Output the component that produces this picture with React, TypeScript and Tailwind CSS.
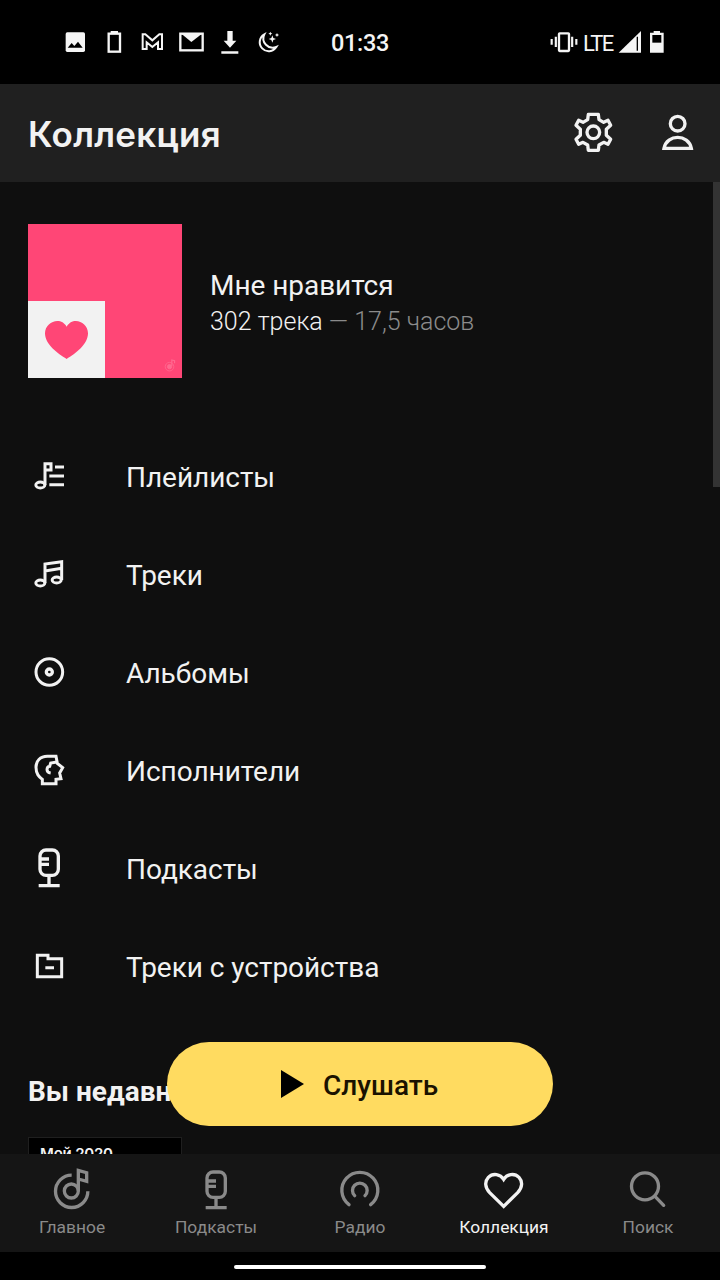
import React from 'react';

interface IconProps {
  children: React.ReactNode;
  className?: string;
  viewBox?: string;
}

function Icon({
  children,
  className = 'size-[42px]',
  viewBox = '0 0 126 126',
}: IconProps) {
  return (
    <svg
      viewBox={viewBox}
      className={`shrink-0 overflow-visible ${className}`}
      fill="none"
      stroke="currentColor"
      strokeWidth="10"
    >
      {children}
    </svg>
  );
}

function MicIcon() {
  return (
    <Icon>
      <rect x="36" y="6" width="55" height="76" rx="18" />
      <path d="M33 33h30M33 49h30M63 82v30M32 113h63" />
    </Icon>
  );
}

const menuItems = [
  {
    label: 'Плейлисты',
    icon: (
      <Icon>
        <g strokeWidth="9">
          <ellipse cx="37" cy="87" rx="13.5" ry="9" />
          <path d="M51 87V23h18v19H51M81 33h27M64 60h44M64 86h44" />
        </g>
      </Icon>
    ),
  },
  {
    label: 'Треки',
    icon: (
      <Icon>
        <g strokeWidth="9">
          <ellipse cx="37" cy="87" rx="13.5" ry="9" />
          <ellipse cx="86" cy="78" rx="13.5" ry="9" />
          <path d="M51 87V30l50-7v55M51 51l50-8" />
        </g>
      </Icon>
    ),
  },
  {
    label: 'Альбомы',
    icon: (
      <Icon>
        <circle cx="64" cy="60" r="40" strokeWidth="9" />
        <circle cx="64" cy="60" r="9" />
      </Icon>
    ),
  },
  {
    label: 'Исполнители',
    icon: (
      <Icon>
        <g strokeWidth="9">
          <path d="M84 19H58C36 19 24 34 24 52c0 20 9 28 19 36v13h41V88l15-2-4-17 9-16-16-13-4-21z" />
          <path d="M87 36 68 39l-3 10c-10 2-12 18 3 20" />
        </g>
      </Icon>
    ),
  },
  { label: 'Подкасты', icon: <MicIcon /> },
  {
    label: 'Треки с устройства',
    icon: (
      <Icon>
        <path d="M28 28h32v10h41v54H28zM52 65h26" strokeWidth="9" />
      </Icon>
    ),
  },
];

const navItems = [
  {
    label: 'Главное',
    icon: (
      <Icon>
        <path d="M62 15.5A48.500 48.500 0 1 0 110.500 64" />
        <circle cx="61" cy="63" r="21" />
        <path d="M82 62V1l25 7v26l-25-7" />
      </Icon>
    ),
  },
  { label: 'Подкасты', icon: <MicIcon /> },
  {
    label: 'Радио',
    icon: (
      <Icon>
        <path
          d="M30 104a54 54 0 1 1 65 0M47 77a22 22 0 1 1 31 0"
          strokeLinecap="round"
        />
      </Icon>
    ),
  },
  {
    label: 'Коллекция',
    active: true,
    icon: (
      <Icon>
        <path d="M62 109 20 68C5 52 5 34 16 22c14-14 36-10 46 6 10-16 32-20 46-6 11 12 11 30-4 46z" />
      </Icon>
    ),
  },
  {
    label: 'Поиск',
    icon: (
      <Icon>
        <circle cx="54" cy="49" r="40.500" />
        <path d="m84 79 26 27" strokeLinecap="round" />
      </Icon>
    ),
  },
];

function StatusBar() {
  const small = 'size-6';
  return (
    <div className="flex h-[84px] shrink-0 items-center bg-black pl-[63px] pr-[55px] text-[#f5f5f5]">
      <div className="flex gap-[14.6px]">
        <Icon className={small} viewBox="0 0 72 72">
          <rect x="8" y="7" width="58" height="59" rx="5" fill="currentColor" stroke="none" />
          <path d="m14 53 12-14 8 9 11-13 14 18z" fill="#000" stroke="none" />
        </Icon>
        <Icon className={small} viewBox="0 0 72 72">
          <rect x="20" y="11" width="34" height="54" strokeWidth="7" />
          <path d="M26 3h22v7H26z" fill="currentColor" stroke="none" />
        </Icon>
        <Icon className={small} viewBox="0 0 72 72">
          <path d="M8 57V13h8l21 18 21-18h8v44H54V37L37 51 20 37v20z" strokeWidth="6" />
        </Icon>
        <Icon className={small} viewBox="0 0 72 72">
          <rect x="4" y="11" width="67" height="50" strokeWidth="7" />
          <path d="M8 12h60L37 36z" fill="currentColor" stroke="none" />
        </Icon>
        <Icon className={small} viewBox="0 0 72 72">
          <path
            d="M31 3h16v29h11L39 53 20 32h11zM13 64h51v7H13z"
            fill="currentColor"
            stroke="none"
          />
        </Icon>
        <Icon className={small} viewBox="0 0 72 72">
          <path d="M25 13a27 27 0 1 0 36 38A28 28 0 0 1 25 13z" strokeWidth="6" />
          <path
            d="m49 16 3 8 8 3-8 3-3 8-3-8-8-3 8-3zM43 5l2 4 4 2-4 2-2 4-2-4-4-2 4-2zM63 9l2 4 4 2-4 2-2 4-2-4-4-2 4-2z"
            fill="currentColor"
            stroke="none"
          />
        </Icon>
      </div>

      <span className="ml-[51px] mt-0.5 w-[59px] font-['Roboto',sans-serif] text-[23.5px] font-medium leading-6 tracking-[-0.3px]">
        01:33
      </span>

      <div className="ml-auto flex items-center">
        <Icon className="h-6 w-7" viewBox="0 0 84 72">
          <rect x="27" y="10" width="30" height="53" strokeWidth="7" rx="2" />
          <path d="M17.500 20v31M66.500 20v31M5 27v17M79 27v17" strokeWidth="6.500" />
        </Icon>
        <span className="ml-[5px] mt-[3px] w-[30px] font-['Roboto',sans-serif] text-[22px] leading-6 tracking-[-1.6px]">
          LTE
        </span>
        <Icon className="ml-[5px] size-6" viewBox="0 0 72 72">
          <path d="M2 68 69 3v65z" fill="currentColor" stroke="none" />
          <path d="M58 20v42" stroke="#000" strokeWidth="4" />
        </Icon>
        <Icon className="ml-[7px] h-6 w-4" viewBox="0 0 48 72">
          <path d="M3 8h11V3h19v5h11v60H3z" fill="currentColor" stroke="none" />
          <path d="M10 15h27v23H10z" fill="#000" stroke="none" />
        </Icon>
      </div>
    </div>
  );
}

function Header() {
  return (
    <header className="flex h-[98px] shrink-0 items-center bg-[#202020] pl-7 pr-[21px] text-[#f2f2f2]">
      <h1 className="mt-0.5 font-['Inter',sans-serif] text-[35px] font-semibold leading-10 tracking-[0.3px]">
        Коллекция
      </h1>
      <button className="-mt-0.5 ml-auto" aria-label="Настройки">
        <Icon>
          <path
            d="M49 10h30l2 16 14 8 13-6 8 15-13 12v18l13 12-8 15-13-6-14 8-2 16H49l-2-16-14-8-13 6-8-15 13-12V55L12 43l8-15 13 6 14-8z"
            strokeLinejoin="round"
          />
          <circle cx="64" cy="64" r="19" />
        </Icon>
      </button>
      <button className="-mt-0.5 ml-[43px]" aria-label="Профиль">
        <Icon>
          <circle cx="62" cy="38" r="22" />
          <path d="M21 112c4-22 23-33 41-33s37 11 41 33z" />
        </Icon>
      </button>
    </header>
  );
}

export default function App() {
  return (
    <div className="flex h-[1280px] w-[720px] flex-col overflow-hidden bg-[#0f0f0f] font-['Roboto',sans-serif] text-[#f2f2f2]">
      <StatusBar />
      <Header />

      <main className="relative h-[972px] shrink-0 overflow-hidden pt-[42px]">
        {/* Liked tracks */}
        <section className="flex items-center gap-7 px-7">
          <div className="flex size-[154px] items-end justify-between bg-[#ff4676]">
            <div className="flex size-[77px] items-center justify-center bg-[#f2f2f2] text-[#ff4676]">
              <Icon className="h-[38px] w-[43px]" viewBox="0 0 129 114">
                <path
                  d="M65 114C38 98 0 70 0 37 0 1 48-15 65 17c17-32 64-16 64 20 0 33-37 61-64 77z"
                  fill="currentColor"
                  stroke="none"
                />
              </Icon>
            </div>
            <Icon className="mb-1.5 mr-1.5 size-3 text-[#ff6a90]" viewBox="0 0 126 126">
              <circle cx="58" cy="70" r="45" strokeWidth="8" />
              <circle cx="58" cy="70" r="22" fill="currentColor" />
              <path d="M82 62V0l29 8v25" strokeWidth="12" />
            </Icon>
          </div>
          <div className="mt-1">
            <div className="text-[28px] leading-9 tracking-[-0.05px]">Мне нравится</div>
            <div className="text-[25px] font-light leading-[35px]">
              302 трека <span className="text-[#8b8b8b]">— 17,5 часов</span>
            </div>
          </div>
        </section>

        {/* Menu */}
        <ul className="mt-[50px]">
          {menuItems.map((item) => (
            <li key={item.label} className="flex h-[98px] items-center gap-14 pl-7">
              {item.icon}
              <span className="mt-0.5 text-[28px] leading-8 tracking-[-0.04px]">
                {item.label}
              </span>
            </li>
          ))}
        </ul>

        {/* Recently played */}
        <h2 className="ml-7 mt-[60px] text-[28px] font-bold leading-8">
          Вы недавно слушали
        </h2>
        <div className="ml-7 mt-[29px] h-[154px] w-[154px] border border-[#1f1f1f] bg-black pl-[11px] pt-[5px] font-['Inter',sans-serif] text-[15px] font-semibold tracking-[-0.2px]">
          Мой 2020
        </div>

        <div className="absolute right-0 top-0 h-[305px] w-[7px] bg-[#333]" />

        <button className="absolute bottom-7 left-[167px] flex h-[84px] w-[386px] items-center gap-[19px] rounded-full bg-[#ffdb60] pl-[114px] text-[28px] font-medium text-[#1a1200]">
          <Icon className="h-7 w-[23px] text-black" viewBox="0 0 23 28">
            <path d="M0 0v28l23-14z" fill="currentColor" stroke="none" />
          </Icon>
          <span className="mt-[3px]">Слушать</span>
        </button>
      </main>

      <nav className="grid h-[98px] shrink-0 grid-cols-5 bg-[#151515]">
        {navItems.map((item) => (
          <button
            key={item.label}
            className={`flex flex-col items-center pt-4 ${
              item.active ? 'text-[#f2f2f2]' : 'text-[#8a8a8a]'
            }`}
          >
            {item.icon}
            <span className="mt-1 text-[17.4px] leading-[22px]">{item.label}</span>
          </button>
        ))}
      </nav>

      <div className="flex h-7 shrink-0 items-center justify-center bg-black">
        <div className="mt-0.5 h-1 w-[252px] rounded-full bg-white" />
      </div>
    </div>
  );
}
